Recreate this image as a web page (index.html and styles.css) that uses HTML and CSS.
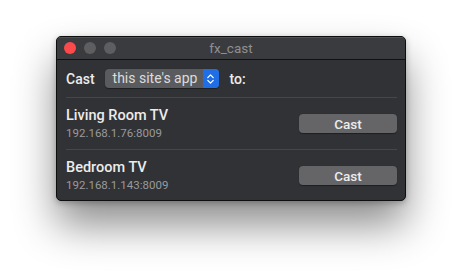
FILE: index.html
```html
<!DOCTYPE html>
<html lang="en">
<head>
  <meta charset="UTF-8"/>
  <meta name="viewport" content="width=device-width,initial-scale=1.0"/>
  <title>fx_cast</title>
  <link rel="stylesheet" href="styles.css">
</head>
<body>

<div class="window">
  <div class="titlebar">
    <div class="lights">
      <span class="light close"></span>
      <span class="light"></span>
      <span class="light"></span>
    </div>
    <div class="title">fx_cast</div>
  </div>

  <div class="content">
    <div class="source-row">
      <span class="label">Cast</span>
      <div class="select">
        <span class="select-text">this site's app</span>
        <span class="stepper">
          <svg width="9" height="12" viewBox="0 0 9 12">
            <path d="M1.8 4.6 L4.5 1.9 L7.2 4.6 M1.8 7.4 L4.5 10.1 L7.2 7.4" fill="none" stroke="#fff" stroke-width="1.3" stroke-linecap="round" stroke-linejoin="round"/>
          </svg>
        </span>
      </div>
      <span class="label">to:</span>
    </div>

    <div class="receiver">
      <div class="receiver-info">
        <div class="receiver-name">Living Room TV</div>
        <div class="receiver-addr">192.168.1.76:8009</div>
      </div>
      <button class="cast-btn">Cast</button>
    </div>

    <div class="receiver">
      <div class="receiver-info">
        <div class="receiver-name">Bedroom TV</div>
        <div class="receiver-addr">192.168.1.143:8009</div>
      </div>
      <button class="cast-btn">Cast</button>
    </div>
  </div>
</div>

</body>
</html>
```

FILE: styles.css
```css
html, body { height: 100%; }
body {
  font-family: Roboto, 'Liberation Sans', sans-serif;
  background: #fff;
  margin: 0; padding: 0;
  overflow: hidden;
}
.window {
  margin: 36px 0 0 56px;
  width: 350px;
  height: 165px;
  box-sizing: border-box;
  background: #313236;
  border: 1px solid #0e0e0f;
  border-radius: 5px;
  box-shadow: 0 24px 42px rgba(0,0,0,0.45), 0 2px 6px rgba(0,0,0,0.25);
  overflow: hidden;
  color: #e6e6e6;
}
.titlebar {
  height: 22px;
  background: #3a3b3e;
  border-bottom: 1px solid #101011;
  box-shadow: inset 0 1px 0 #505154;
  display: flex;
  align-items: center;
  position: relative;
}
.lights {
  display: flex; gap: 8px;
  padding-left: 7px;
}
.light {
  width: 12px; height: 12px;
  border-radius: 50%;
  background: #5e5e61;
}
.light.close { background: #fc4a4c; }
.title {
  position: absolute;
  left: 0; right: 0; top: 0;
  line-height: 22px;
  text-align: center;
  font-size: 13.5px;
  color: #8f8f91;
  pointer-events: none;
}
.content {
  padding: 0 8px 0 9px;
}
.source-row {
  height: 37px;
  display: flex;
  align-items: center;
  gap: 11px;
  border-bottom: 1px solid #46474a;
}
.label {
  font-size: 14px;
  font-weight: 500;
  color: #ececec;
}
.select {
  display: flex;
  width: 114px;
  height: 19px;
  margin-left: -1px;
  border-radius: 4px;
  background: #5a5b5e;
  overflow: hidden;
  box-shadow: 0 0.5px 1px rgba(0,0,0,0.4);
}
.select-text {
  flex: 1;
  padding-left: 8px;
  font-size: 14px;
  line-height: 19px;
  color: #dcdcdc;
}
.stepper {
  width: 16px;
  background: #1f6ee6;
  display: flex;
  align-items: center;
  justify-content: center;
}
.receiver {
  height: 51px;
  display: flex;
  align-items: center;
  justify-content: space-between;
  border-bottom: 1px solid #46474a;
}
.receiver:last-child { border-bottom: none; }
.receiver-info {
  display: flex;
  flex-direction: column;
  gap: 2px;
}
.receiver-name {
  font-size: 14.5px;
  font-weight: 500;
  color: #ececec;
}
.receiver-addr {
  font-size: 11.5px;
  color: #9a9a9c;
}
.cast-btn {
  width: 98px;
  height: 19px;
  border: none;
  border-radius: 4px;
  background: #656568;
  color: #ececec;
  font-family: inherit;
  font-size: 13.5px;
  font-weight: 500;
  padding: 0;
  box-shadow: 0 0.5px 1px rgba(0,0,0,0.4);
}
```
